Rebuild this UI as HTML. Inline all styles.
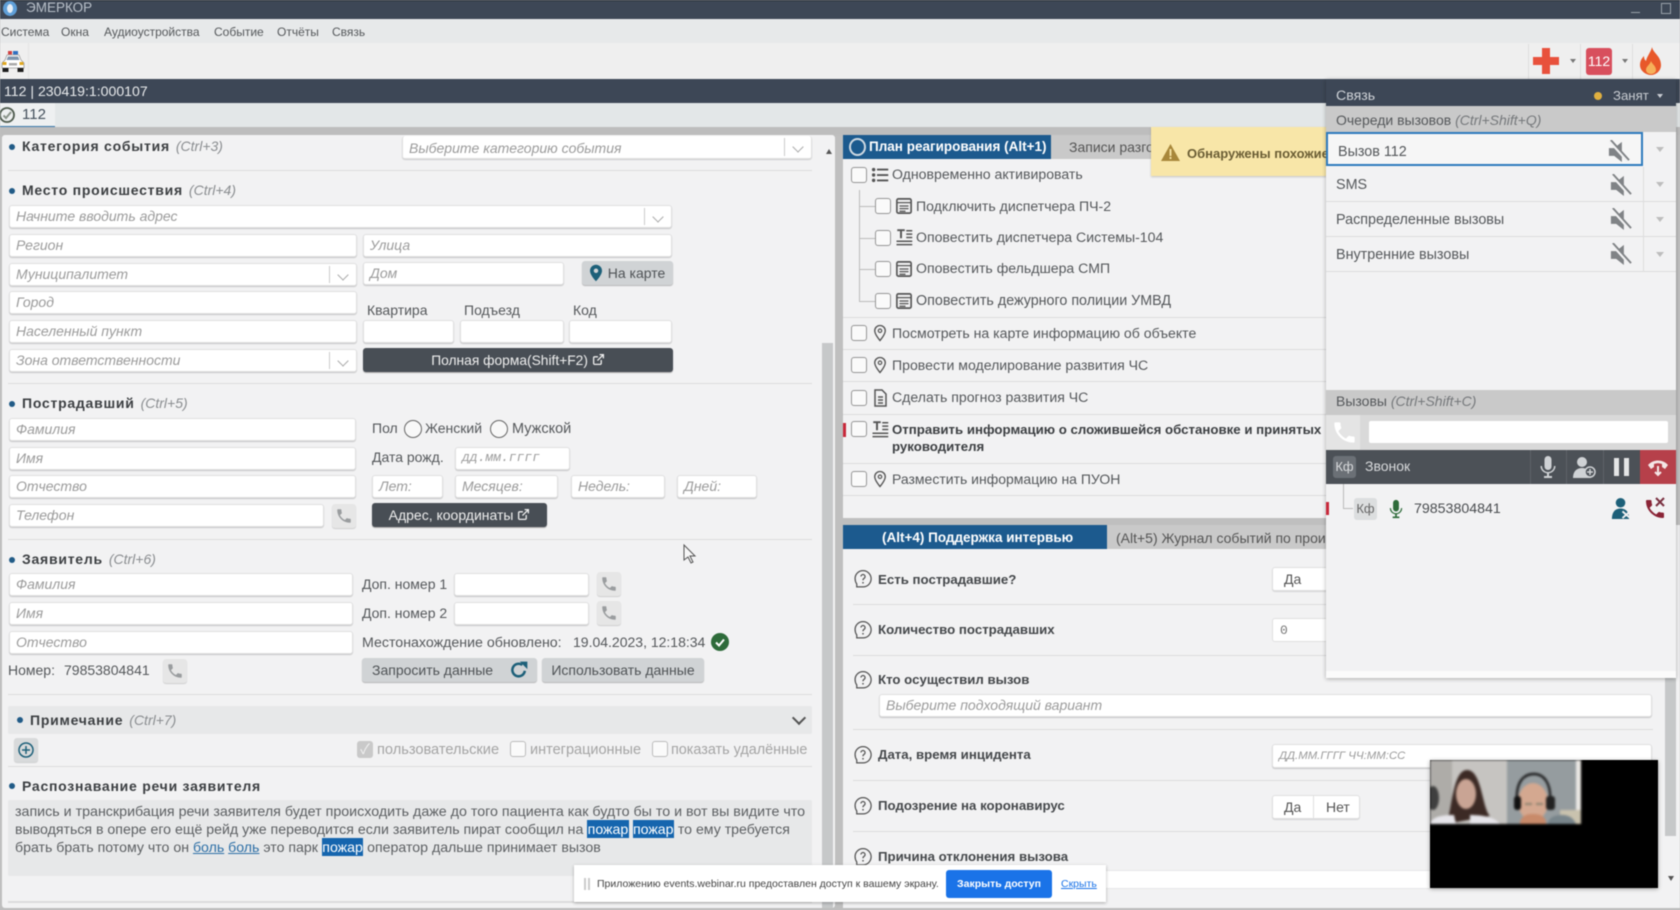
<!DOCTYPE html>
<html lang="ru"><head><meta charset="utf-8"><title>ЭМЕРКОР</title>
<style>
*{box-sizing:border-box}
html,body{margin:0;padding:0;width:1680px;height:910px;overflow:hidden;background:#bfbfbf}
body{font-family:"Liberation Sans","Noto Sans CJK SC",sans-serif;font-size:14px;color:#4a4d50;position:relative}
#w{position:absolute;left:0;top:0;width:1680px;height:910px;overflow:hidden;filter:blur(.55px)}
.a,.t,.i,.b,.dv,.cb,.h,.dot{position:absolute}
.t{white-space:nowrap;line-height:20px;height:20px}
.i{background:#fff;border:1px solid #e0e0e0;border-radius:3px;box-shadow:0 1px 1px rgba(0,0,0,.18);font-style:italic;color:#9b9b9b;padding-left:6px;line-height:20px;white-space:nowrap;overflow:hidden}
.i .s{position:absolute;right:0;top:2px;bottom:2px;width:27px;border-left:1px solid #ccc}
.i .s:after{content:"";position:absolute;left:9px;top:5px;width:7px;height:7px;border-right:1.3px solid #aaa;border-bottom:1.3px solid #aaa;transform:rotate(45deg)}
.b{border-radius:3px;text-align:center;white-space:nowrap;line-height:24px}
.dk{background:#484e55;color:#eee;box-shadow:0 1px 1px rgba(0,0,0,.3)}
.lt{background:#d0d3d5;color:#4f5356;box-shadow:0 1px 1px rgba(0,0,0,.25)}
.ph{background:#e6e6e6;border-radius:3px;position:absolute;box-shadow:0 1px 1px rgba(0,0,0,.15)}
.ph svg{position:absolute;left:3px;top:3px}
.dv{height:1px;background:#dcdcdc}
.h{font-weight:bold;color:#3c3f42;letter-spacing:.75px;white-space:nowrap;line-height:20px}
.h i{font-weight:normal;color:#8a8d90;letter-spacing:0;margin-left:6px}
.dot{width:6px;height:6px;border-radius:50%;background:#215b87}
.cb{width:16px;height:16px;border:1.5px solid #969696;border-radius:3px;background:#fafafa}
.g{color:#55585b}
.m{background:#1565ae;color:#fff;padding:1px .4px}
.l{color:#2d6fa6;text-decoration:underline}
.rw{color:#55585b;font-size:14.1px}
.qt{color:#45484b;font-weight:bold;font-size:13.25px}
.cr{color:#55585b;font-size:14.35px}
</style></head><body>
<svg width="0" height="0" style="position:absolute"><defs>
<symbol id="phone" viewBox="0 0 24 24"><path d="M6.600 10.800c1.400 2.800 3.800 5.100 6.600 6.600l2.200-2.200c.3-.3.7-.4 1-.2 1.100.4 2.300.6 3.600.6.600 0 1 .4 1 1V20c0 .6-.4 1-1 1C10.600 21 3 13.400 3 4c0-.6.400-1 1-1h3.500c.6 0 1 .4 1 1 0 1.300.2 2.500.6 3.600.1.300 0 .7-.2 1z"/></symbol>
<symbol id="mute" viewBox="0 0 24 24"><path d="M2 8.500v8h5.500l8 6.500V2l-8 6.500z"/><path d="M3 1l19 21" stroke="#f2f2f3" stroke-width="3.600"/><path d="M4 0l19 21" stroke="currentColor" stroke-width="2"/></symbol>
<symbol id="mic" viewBox="0 0 24 24"><path d="M12 15a3.500 3.500 0 0 0 3.500-3.500v-7a3.500 3.500 0 0 0-7 0v7A3.500 3.500 0 0 0 12 15zm6-4a6 6 0 0 1-12 0H4.500a7.500 7.500 0 0 0 6.500 7.400V21H8v2h8v-2h-3v-2.600a7.500 7.500 0 0 0 6.500-7.400z"/></symbol>
<symbol id="pin" viewBox="0 0 24 24"><path fill="none" stroke="currentColor" stroke-width="1.800" d="M12 2a7 7 0 0 0-7 7c0 5 7 13 7 13s7-8 7-13a7 7 0 0 0-7-7z"/><circle cx="12" cy="9" r="2.300" fill="none" stroke="currentColor" stroke-width="1.600"/></symbol>
<symbol id="doc" viewBox="0 0 24 24"><rect x="2.500" y="2.500" width="19" height="19" rx="2" fill="none" stroke="currentColor" stroke-width="2.200"/><path d="M3 7.500h18M6 12h12M6 15.500h12M6 19h8" stroke="currentColor" stroke-width="1.800"/></symbol>
<symbol id="te" viewBox="0 0 24 24"><path d="M3 1h10v2.500H9.300V13H6.700V3.500H3zM15 2h8v2h-8zM15 6.500h8v2h-8zM15 11h8v2h-8zM2 16h21v2H2zM2 20.500h21v2H2z"/></symbol>
<symbol id="list" viewBox="0 0 24 24"><path d="M8 3.500h15v2.500H8zM8 10.800h15v2.500H8zM8 18h15v2.500H8z"/><circle cx="3.500" cy="4.800" r="2.300"/><circle cx="3.500" cy="12" r="2.300"/><circle cx="3.500" cy="19.200" r="2.300"/></symbol>
<symbol id="q" viewBox="0 0 24 24"><path fill="none" stroke="currentColor" stroke-width="1.500" d="M12 2a9.500 9.500 0 0 0-9.500 9.500c0 3 1 5 2 6.500v3.500H12a9.500 9.500 0 0 0 0-19.500z"/><path fill="none" stroke="currentColor" stroke-width="1.500" d="M9.500 9a2.500 2.500 0 1 1 3.800 2.200c-1 .6-1.300 1.100-1.300 2.300"/><circle cx="12" cy="16.500" r="1"/></symbol>
<symbol id="ext" viewBox="0 0 24 24"><path fill="none" stroke="currentColor" stroke-width="2.400" d="M17 13v6a2 2 0 0 1-2 2H5a2 2 0 0 1-2-2V9a2 2 0 0 1 2-2h6M14 3h7v7M21 3 10 14"/></symbol>
</defs></svg>
<div id="w">
<!-- title bar -->
<div class="a" style="left:0;top:0;width:1680px;height:19px;background:#3d4756;border-top:1px solid #262b33"></div>
<div class="a" style="left:3px;top:1px;width:14px;height:15px;border-radius:50%;background:#5f9fd8"></div>
<div class="a" style="left:7px;top:4px;width:6px;height:9px;border-radius:50%;background:#e6eef6"></div>
<div class="t" style="left:26px;top:-2px;color:#b9c0c9;font-size:13.500px">ЭМЕРКОР</div>
<div class="a" style="left:1631px;top:12px;width:9px;height:1px;background:#98a0a8"></div>
<div class="a" style="left:1661px;top:3px;width:10px;height:11px;border:1px solid #98a0a8"></div>
<!-- menu -->
<div class="a" style="left:0;top:19px;width:1680px;height:24px;background:#e7e9ea"></div>
<div class="t g" style="left:1px;top:22px;font-size:12px">Система</div>
<div class="t g" style="left:61px;top:22px;font-size:12px">Окна</div>
<div class="t g" style="left:104px;top:22px;font-size:12px">Аудиоустройства</div>
<div class="t g" style="left:214px;top:22px;font-size:12px">Событие</div>
<div class="t g" style="left:277px;top:22px;font-size:12px">Отчёты</div>
<div class="t g" style="left:332px;top:22px;font-size:12px">Связь</div>
<!-- toolbar -->
<div class="a" style="left:0;top:43px;width:1680px;height:36px;background:#efefef"></div>
<div class="a" style="left:28px;top:43px;width:1px;height:36px;background:#e4e4e4"></div>
<svg class="a" style="left:1px;top:51px" width="24" height="21" viewBox="0 0 24 21"><rect x="7" y="0" width="4" height="3.500" fill="#d04040"/><rect x="12" y="0" width="5" height="3.500" fill="#2f6fc0"/><path d="M6 4h12l2 5 3 3v5H1v-5l3-3z" fill="#fff" stroke="#9a9a9a" stroke-width=".8"/><path d="M7 5.500h10l1.500 3.500H5.500z" fill="#7f95ad"/><rect x="1.500" y="11" width="4" height="3" fill="#e0a820"/><rect x="18.500" y="11" width="4" height="3" fill="#e0a820"/><rect x="8" y="12" width="8" height="2.500" fill="#aaa"/><rect x="1.500" y="17" width="6" height="4" fill="#1c1c1c"/><rect x="16.500" y="17" width="6" height="4" fill="#1c1c1c"/></svg>
<svg class="a" style="left:1532px;top:47px" width="28" height="28" viewBox="0 0 28 28"><path d="M10 1h8v9h9v8h-9v9h-8v-9H1v-8h9z" fill="#e8513c"/></svg>
<div class="a" style="left:1570px;top:59px;border:3px solid transparent;border-top:4px solid #777"></div>
<div class="a" style="left:1586px;top:48px;width:26px;height:27px;background:#d84f5d;border-radius:3px;color:#fff;font-size:14px;line-height:27px;text-align:center">112</div>
<div class="a" style="left:1622px;top:59px;border:3px solid transparent;border-top:4px solid #777"></div>
<svg class="a" style="left:1639px;top:47px" width="24" height="28" viewBox="0 0 24 28"><path d="M13 0c1 6 9 9 9 18 0 6-5 10-10 10S1 24 1 18c0-4 2-7 4-9 0 3 1 4 2 5 1-5 5-9 6-14z" fill="#e8582a"/><path d="M12 14c1 3 5 5 5 9 0 2-2 4-5 4s-5-2-5-4c0-4 4-5 5-9z" fill="#f6b05a"/></svg>
<div class="a" style="left:1528px;top:44px;width:1px;height:35px;background:#dedede"></div>
<div class="a" style="left:1580px;top:44px;width:1px;height:35px;background:#dedede"></div>
<div class="a" style="left:1632px;top:44px;width:1px;height:35px;background:#dedede"></div>
<!-- dark bar -->
<div class="a" style="left:0;top:79px;width:1680px;height:24px;background:#3d4756"></div>
<div class="t" style="left:4px;top:81px;color:#e8eaec;font-size:14.100px">112 | 230419:1:000107</div>
<!-- tab bar -->
<div class="a" style="left:0;top:103px;width:1680px;height:24px;background:#e3e7e8"></div>
<div class="a" style="left:0;top:103px;width:55px;height:25px;background:#eef0f1;border-bottom:2px solid #3878ad"></div>
<svg class="a" style="left:-1px;top:106px" width="17" height="18" viewBox="0 0 17 18"><circle cx="8" cy="9" r="7" fill="#eef0f1" stroke="#4d5a4d" stroke-width="1.800"/><path d="M4.500 9.500l2.500 2.500 5-6" fill="none" stroke="#8a948a" stroke-width="2"/></svg>
<div class="t" style="left:22px;top:105px;font-size:15px;color:#44505c">112</div>
<div class="a" style="left:0;top:127px;width:1680px;height:8px;background:#bdbdbd"></div>

<!-- LEFT PANEL -->
<div class="a" style="left:2px;top:135px;width:833px;height:773px;background:#f2f2f3;border-radius:3px"></div>
<div class="dot" style="left:9px;top:144px"></div><div class="h" style="left:22px;top:136px">Категория события<i>(Ctrl+3)</i></div>
<div class="i" style="left:402px;top:136px;width:410px;height:23px;border-top:0;line-height:24px;box-shadow:0 1px 1px rgba(0,0,0,.15)">Выберите категорию события<span class="s"></span></div>
<div class="a" style="left:826px;top:146px;border:3px solid transparent;border-bottom:5px solid #555"></div>
<div class="a" style="left:822px;top:343px;width:11px;height:565px;background:#c6c8c9"></div>
<div class="dv" style="left:8px;top:170px;width:804px"></div>

<div class="dot" style="left:9px;top:188px"></div><div class="h" style="left:22px;top:180px">Место происшествия<i>(Ctrl+4)</i></div>
<div class="i" style="left:9px;top:205px;width:663px;height:23px">Начните вводить адрес<span class="s"></span></div>
<div class="i" style="left:9px;top:234px;width:348px;height:23px">Регион</div>
<div class="i" style="left:363px;top:234px;width:309px;height:23px">Улица</div>
<div class="i" style="left:9px;top:263px;width:348px;height:23px">Муниципалитет<span class="s"></span></div>
<div class="i" style="left:363px;top:262px;width:201px;height:23px">Дом</div>
<div class="b lt" style="left:582px;top:261px;width:91px;height:24px;padding-left:18px">На карте</div>
<svg class="a" style="left:587px;top:264px;color:#1d6079" width="18" height="18" viewBox="0 0 24 24"><path fill="#1d6079" d="M12 1a8 8 0 0 0-8 8c0 6 8 14 8 14s8-8 8-14a8 8 0 0 0-8-8zm0 11a3 3 0 1 1 0-6 3 3 0 0 1 0 6z"/></svg>
<div class="i" style="left:9px;top:291px;width:348px;height:23px">Город</div>
<div class="t g" style="left:367px;top:300px">Квартира</div><div class="t g" style="left:464px;top:300px">Подъезд</div><div class="t g" style="left:573px;top:300px">Код</div>
<div class="i" style="left:9px;top:320px;width:348px;height:23px">Населенный пункт</div>
<div class="i" style="left:363px;top:320px;width:91px;height:23px"></div>
<div class="i" style="left:460px;top:320px;width:104px;height:23px"></div>
<div class="i" style="left:569px;top:320px;width:103px;height:23px"></div>
<div class="i" style="left:9px;top:349px;width:348px;height:23px">Зона ответственности<span class="s"></span></div>
<div class="b dk" style="left:363px;top:348px;width:310px;height:24px;font-size:13.800px;line-height:25px">Полная форма(Shift+F2) <svg width="13" height="13" style="vertical-align:-1px;color:#eee"><use href="#ext"/></svg></div>
<div class="dv" style="left:8px;top:383px;width:804px"></div>

<div class="dot" style="left:9px;top:401px"></div><div class="h" style="left:22px;top:393px">Пострадавший<i>(Ctrl+5)</i></div>
<div class="i" style="left:9px;top:418px;width:347px;height:23px">Фамилия</div>
<div class="t g" style="left:372px;top:418px">Пол</div>
<div class="a" style="left:404px;top:420px;width:18px;height:18px;border:1.500px solid #666;border-radius:50%;background:#f8f8f8"></div>
<div class="t g" style="left:425px;top:418px">Женский</div>
<div class="a" style="left:490px;top:420px;width:18px;height:18px;border:1.500px solid #666;border-radius:50%;background:#f8f8f8"></div>
<div class="t g" style="left:512px;top:419px;font-size:14.500px">Мужской</div>
<div class="i" style="left:9px;top:447px;width:347px;height:23px">Имя</div>
<div class="t g" style="left:372px;top:447px">Дата рожд.</div>
<div class="i" style="left:455px;top:447px;width:115px;height:23px;font-family:'Liberation Mono',monospace;font-size:13px;font-style:italic">дд.мм.гггг</div>
<div class="i" style="left:9px;top:475px;width:347px;height:23px">Отчество</div>
<div class="i" style="left:372px;top:475px;width:71px;height:23px">Лет:</div>
<div class="i" style="left:455px;top:475px;width:103px;height:23px">Месяцев:</div>
<div class="i" style="left:571px;top:475px;width:94px;height:23px">Недель:</div>
<div class="i" style="left:677px;top:475px;width:80px;height:23px">Дней:</div>
<div class="i" style="left:9px;top:504px;width:315px;height:23px">Телефон</div>
<div class="ph" style="left:332px;top:504px;width:24px;height:24px"><svg width="18" height="18" fill="#9a9d9f"><use href="#phone"/></svg></div>
<div class="b dk" style="left:372px;top:503px;width:175px;height:24px;line-height:25px">Адрес, координаты <svg width="13" height="13" style="vertical-align:-1px;color:#eee"><use href="#ext"/></svg></div>
<div class="dv" style="left:8px;top:539px;width:804px"></div>

<div class="dot" style="left:9px;top:557px"></div><div class="h" style="left:22px;top:549px">Заявитель<i>(Ctrl+6)</i></div>
<div class="i" style="left:9px;top:573px;width:344px;height:23px">Фамилия</div>
<div class="t g" style="left:362px;top:574px">Доп. номер 1</div>
<div class="i" style="left:454px;top:573px;width:135px;height:23px"></div>
<div class="ph" style="left:597px;top:572px;width:24px;height:24px"><svg width="18" height="18" fill="#9a9d9f"><use href="#phone"/></svg></div>
<div class="i" style="left:9px;top:602px;width:344px;height:23px">Имя</div>
<div class="t g" style="left:362px;top:603px">Доп. номер 2</div>
<div class="i" style="left:454px;top:602px;width:135px;height:23px"></div>
<div class="ph" style="left:597px;top:601px;width:24px;height:24px"><svg width="18" height="18" fill="#9a9d9f"><use href="#phone"/></svg></div>
<div class="i" style="left:9px;top:631px;width:344px;height:23px">Отчество</div>
<div class="t g" style="left:362px;top:633px;font-size:14.200px">Местонахождение обновлено:</div>
<div class="t g" style="left:573px;top:632px">19.04.2023, 12:18:34</div>
<svg class="a" style="left:711px;top:633px" width="18" height="18" viewBox="0 0 18 18"><circle cx="9" cy="9" r="9" fill="#2e6b3a"/><path d="M5 9.500l3 3 5-6" fill="none" stroke="#fff" stroke-width="2"/></svg>
<div class="t g" style="left:8px;top:660px">Номер:</div><div class="t g" style="left:64px;top:660px">79853804841</div>
<div class="ph" style="left:163px;top:659px;width:24px;height:24px"><svg width="18" height="18" fill="#9a9d9f"><use href="#phone"/></svg></div>
<div class="b lt" style="left:362px;top:658px;width:175px;height:24px;text-align:left;padding-left:10px">Запросить данные</div>
<svg class="a" style="left:509px;top:660px" width="20" height="20" viewBox="0 0 24 24"><path fill="none" stroke="#1d6079" stroke-width="3" d="M19 13a7.500 7.500 0 1 1-3-7"/><path fill="#1d6079" d="M13 2h9v9z"/></svg>
<div class="b lt" style="left:542px;top:658px;width:162px;height:24px">Использовать данные</div>
<div class="dv" style="left:8px;top:694px;width:804px"></div>

<div class="a" style="left:8px;top:706px;width:804px;height:28px;background:#e7e8e9;border-radius:2px"></div>
<div class="dot" style="left:17px;top:717px"></div><div class="h" style="left:30px;top:710px">Примечание<i>(Ctrl+7)</i></div>
<div class="a" style="left:794px;top:713px;width:10px;height:10px;border-right:2px solid #555;border-bottom:2px solid #555;transform:rotate(45deg)"></div>
<div class="ph" style="left:14px;top:738px;width:24px;height:24px;background:#d8dadb"><svg width="18" height="18" viewBox="0 0 18 18" fill="none" stroke="#1d6079" stroke-width="1.500"><circle cx="9" cy="9" r="7"/><path d="M9 5v8M5 9h8"/></svg></div>
<div class="a" style="left:357px;top:741px;width:16px;height:17px;border-radius:3px;background:#c9c9c9;color:#f2f2f2;font-size:14px;line-height:17px;text-align:center">✓</div>
<div class="t" style="left:377px;top:740px;color:#a4a4a4;font-size:14.600px">пользовательские</div>
<div class="cb" style="left:510px;top:741px;border-color:#bcbcbc"></div>
<div class="t" style="left:530px;top:740px;color:#a4a4a4;font-size:14.500px">интеграционные</div>
<div class="cb" style="left:652px;top:741px;border-color:#bcbcbc"></div>
<div class="t" style="left:671px;top:740px;color:#a4a4a4;font-size:14.400px">показать удалённые</div>
<div class="dv" style="left:8px;top:766px;width:804px"></div>

<div class="dot" style="left:9px;top:783px"></div><div class="h" style="left:22px;top:776px">Распознавание речи заявителя</div>
<div class="a" style="left:8px;top:800px;width:804px;height:76px;background:#e7e8e9;border-radius:2px"></div>
<div class="t" style="left:15px;top:802px;font-size:14.250px;color:#5c5f62">запись и транскрибация речи заявителя будет происходить даже до того пациента как будто бы то и вот вы видите что</div>
<div class="t" style="left:15px;top:819px;font-size:14.150px;color:#5c5f62">выводяться в опере его ещё рейд уже переводится если заявитель пират сообщил на <span class="m">пожар</span> <span class="m">пожар</span> то ему требуется</div>
<div class="t" style="left:15px;top:837px;font-size:14.150px;color:#5c5f62">брать брать потому что он <span class="l">боль</span> <span class="l">боль</span> это парк <span class="m">пожар</span> оператор дальше принимает вызов</div>
<div class="dv" style="left:8px;top:901px;width:804px;height:2px"></div>

<!-- RIGHT MAIN top -->
<div class="a" style="left:843px;top:135px;width:484px;height:383px;background:#f2f2f3"></div>
<div class="a" style="left:843px;top:135px;width:484px;height:24px;background:#c9c9c9"></div>
<div class="a" style="left:843px;top:135px;width:208px;height:24px;background:#1c5a8e"></div>
<div class="a" style="left:849px;top:138px;width:17px;height:18px;border:2px solid #cfd9e2;border-radius:50%"></div>
<div class="t" style="left:869px;top:137px;color:#fff;font-weight:bold;font-size:13.500px">План реагирования (Alt+1)</div>
<div class="t" style="left:1069px;top:137px;color:#555">Записи разговоров</div>

<div class="cb" style="left:851px;top:167px"></div><svg class="a" style="left:871px;top:166px;fill:#555" width="18" height="18"><use href="#list"/></svg>
<div class="t rw" style="left:892px;top:164px">Одновременно активировать</div>
<div class="a" style="left:859px;top:190px;width:1px;height:112px;background:#bbb"></div>
<div class="a" style="left:859px;top:206px;width:16px;height:1px;background:#bbb"></div>
<div class="a" style="left:859px;top:238px;width:16px;height:1px;background:#bbb"></div>
<div class="a" style="left:859px;top:269px;width:16px;height:1px;background:#bbb"></div>
<div class="a" style="left:859px;top:301px;width:16px;height:1px;background:#bbb"></div>
<div class="cb" style="left:875px;top:198px"></div><svg class="a" style="left:895px;top:197px;color:#555" width="18" height="18"><use href="#doc"/></svg>
<div class="t rw" style="left:916px;top:196px">Подключить диспетчера ПЧ-2</div>
<div class="cb" style="left:875px;top:230px"></div><svg class="a" style="left:895px;top:228px;fill:#555" width="18" height="19"><use href="#te"/></svg>
<div class="t rw" style="left:916px;top:227px">Оповестить диспетчера Системы-104</div>
<div class="cb" style="left:875px;top:261px"></div><svg class="a" style="left:895px;top:260px;color:#555" width="18" height="18"><use href="#doc"/></svg>
<div class="t rw" style="left:916px;top:258px">Оповестить фельдшера СМП</div>
<div class="cb" style="left:875px;top:293px"></div><svg class="a" style="left:895px;top:292px;color:#555" width="18" height="18"><use href="#doc"/></svg>
<div class="t rw" style="left:916px;top:291px;font-size:14.300px">Оповестить дежурного полиции УМВД</div>
<div class="dv" style="left:843px;top:317px;width:484px"></div>
<div class="cb" style="left:851px;top:325px"></div><svg class="a" style="left:871px;top:324px;color:#555" width="18" height="18"><use href="#pin"/></svg>
<div class="t rw" style="left:892px;top:323px">Посмотреть на карте информацию об объекте</div>
<div class="dv" style="left:843px;top:349px;width:484px"></div>
<div class="cb" style="left:851px;top:357px"></div><svg class="a" style="left:871px;top:356px;color:#555" width="18" height="18"><use href="#pin"/></svg>
<div class="t rw" style="left:892px;top:355px">Провести моделирование развития ЧС</div>
<div class="dv" style="left:843px;top:381px;width:484px"></div>
<div class="cb" style="left:851px;top:390px"></div><svg class="a" style="left:871px;top:389px" width="18" height="18" viewBox="0 0 18 18" fill="none" stroke="#555" stroke-width="1.500"><path d="M4 1h7l4 4v12H4zM7 8h5M7 11h5M7 14h5"/></svg>
<div class="t rw" style="left:892px;top:387px">Сделать прогноз развития ЧС</div>
<div class="dv" style="left:843px;top:414px;width:484px"></div>
<div class="a" style="left:843px;top:423px;width:3px;height:14px;background:#c8283a"></div>
<div class="cb" style="left:851px;top:421px"></div><svg class="a" style="left:871px;top:420px;fill:#555" width="18" height="19"><use href="#te"/></svg>
<div class="t" style="left:892px;top:420px;color:#3c3f42;font-weight:bold;font-size:13.250px">Отправить информацию о сложившейся обстановке и принятых</div>
<div class="t" style="left:892px;top:437px;color:#3c3f42;font-weight:bold;font-size:13.250px">руководителя</div>
<div class="dv" style="left:843px;top:463px;width:484px"></div>
<div class="cb" style="left:851px;top:471px"></div><svg class="a" style="left:871px;top:470px;color:#555" width="18" height="18"><use href="#pin"/></svg>
<div class="t rw" style="left:892px;top:469px;font-size:14px">Разместить информацию на ПУОН</div>
<div class="dv" style="left:843px;top:495px;width:484px"></div>

<!-- warn -->
<div class="a" style="left:1151px;top:127px;width:176px;height:49px;background:#f8e6a8;box-shadow:0 1px 2px rgba(0,0,0,.2);overflow:hidden">
<svg class="a" style="left:10px;top:17px" width="19" height="17" viewBox="0 0 19 17"><path d="M9.500 0l9.500 17H0z" fill="#a8873a"/><rect x="8.600" y="5" width="1.800" height="7" fill="#f8e6a8"/><rect x="8.600" y="13" width="1.800" height="2" fill="#f8e6a8"/></svg>
<div class="t" style="left:36px;top:17px;color:#6a5d34;font-weight:bold;font-size:13px">Обнаружены похожие</div></div>

<!-- RIGHT MAIN bottom -->
<div class="a" style="left:843px;top:525px;width:837px;height:385px;background:#f2f2f3"></div>
<div class="a" style="left:843px;top:525px;width:484px;height:24px;background:#c9c9c9"></div>
<div class="a" style="left:843px;top:525px;width:264px;height:24px;background:#1c5a8e"></div>
<div class="t" style="left:882px;top:528px;color:#fff;font-weight:bold;font-size:13.500px">(Alt+4) Поддержка интервью</div>
<div class="t" style="left:1116px;top:528px;color:#555">(Alt+5) Журнал событий по происшествию</div>

<svg class="a" style="left:853px;top:568px;color:#555;fill:#555" width="20" height="22"><use href="#q"/></svg>
<div class="t qt" style="left:878px;top:570px">Есть пострадавшие?</div>
<div class="a" style="left:1272px;top:567px;width:100px;height:24px;background:#fff;border:1px solid #e0e0e0;border-radius:3px;line-height:23px;color:#555;padding-left:11px;box-shadow:0 1px 1px rgba(0,0,0,.12)">Да</div>
<div class="dv" style="left:853px;top:604px;width:800px"></div>
<svg class="a" style="left:853px;top:619px;color:#555;fill:#555" width="20" height="22"><use href="#q"/></svg>
<div class="t qt" style="left:878px;top:620px">Количество пострадавших</div>
<div class="a" style="left:1272px;top:618px;width:100px;height:24px;background:#fff;border:1px solid #e0e0e0;border-radius:3px;line-height:23px;color:#777;padding-left:7px;font-family:'Liberation Mono',monospace;font-size:13px">0</div>
<div class="dv" style="left:853px;top:655px;width:800px"></div>
<svg class="a" style="left:853px;top:669px;color:#555;fill:#555" width="20" height="22"><use href="#q"/></svg>
<div class="t qt" style="left:878px;top:670px">Кто осуществил вызов</div>
<div class="i" style="left:879px;top:694px;width:773px;height:23px">Выберите подходящий вариант</div>
<div class="dv" style="left:853px;top:729px;width:800px"></div>
<svg class="a" style="left:853px;top:744px;color:#555;fill:#555" width="20" height="22"><use href="#q"/></svg>
<div class="t qt" style="left:878px;top:745px">Дата, время инцидента</div>
<div class="i" style="left:1272px;top:744px;width:380px;height:24px;font-size:11.400px;line-height:22px">ДД.ММ.ГГГГ ЧЧ:ММ:СС</div>
<div class="dv" style="left:853px;top:780px;width:800px"></div>
<svg class="a" style="left:853px;top:795px;color:#555;fill:#555" width="20" height="22"><use href="#q"/></svg>
<div class="t qt" style="left:878px;top:796px">Подозрение на коронавирус</div>
<div class="a" style="left:1272px;top:795px;width:88px;height:24px;background:#fff;border:1px solid #e0e0e0;border-radius:3px;line-height:23px;color:#555;padding-left:11px;box-shadow:0 1px 1px rgba(0,0,0,.12)">Да<span style="position:absolute;left:40px;top:0;bottom:0;width:1px;background:#e0e0e0"></span><span style="position:absolute;left:53px;top:0">Нет</span></div>
<div class="dv" style="left:853px;top:831px;width:800px"></div>
<svg class="a" style="left:853px;top:846px;color:#555;fill:#555" width="20" height="22"><use href="#q"/></svg>
<div class="t qt" style="left:878px;top:847px">Причина отклонения вызова</div>
<div class="a" style="left:879px;top:870px;width:773px;height:19px;background:#fff;border:1px solid #e8e8e8"></div>
<div class="a" style="left:1665px;top:678px;width:11px;height:158px;background:#c6c8c9"></div>
<div class="a" style="left:1668px;top:876px;border:3px solid transparent;border-top:5px solid #555"></div>

<!-- CONNECT PANEL -->
<div class="a" style="left:1326px;top:79px;width:350px;height:599px;background:#f2f2f3;box-shadow:0 1px 4px rgba(0,0,0,.3)"></div>
<div class="a" style="left:1326px;top:79px;width:350px;height:27px;background:#3d4756"></div>
<div class="t" style="left:1336px;top:86px;color:#cfd3d8;font-size:14.200px">Связь</div>
<div class="a" style="left:1594px;top:92px;width:8px;height:8px;border-radius:50%;background:#e0b040"></div>
<div class="t" style="left:1613px;top:86px;color:#c8ccd2;font-size:13.200px">Занят</div>
<div class="a" style="left:1657px;top:94px;border:3.500px solid transparent;border-top:4px solid #c8ccd2"></div>
<div class="a" style="left:1326px;top:106px;width:350px;height:26px;background:#c9c9c9"></div>
<div class="t" style="left:1336px;top:110px;color:#55585b;font-size:14px">Очереди вызовов <i style="color:#75787b">(Ctrl+Shift+Q)</i></div>

<div class="a" style="left:1326px;top:132px;width:317px;height:34px;border:2px solid #2e7bbd;background:#f6f6f6"></div>
<div class="t cr" style="left:1338px;top:142px">Вызов 112</div>
<svg class="a" style="left:1607px;top:140px;fill:#808386;color:#808386" width="23" height="23"><use href="#mute"/></svg>
<div class="a" style="left:1656px;top:147px;border:4px solid transparent;border-top:5px solid #bdbdbd"></div>
<div class="t cr" style="left:1336px;top:175px">SMS</div>
<svg class="a" style="left:1609px;top:174px;fill:#808386;color:#808386" width="23" height="23"><use href="#mute"/></svg>
<div class="a" style="left:1656px;top:182px;border:4px solid transparent;border-top:5px solid #bdbdbd"></div>
<div class="dv" style="left:1326px;top:201px;width:350px"></div>
<div class="t cr" style="left:1336px;top:210px">Распределенные вызовы</div>
<svg class="a" style="left:1609px;top:208px;fill:#808386;color:#808386" width="23" height="23"><use href="#mute"/></svg>
<div class="a" style="left:1656px;top:217px;border:4px solid transparent;border-top:5px solid #bdbdbd"></div>
<div class="dv" style="left:1326px;top:236px;width:350px"></div>
<div class="t cr" style="left:1336px;top:245px">Внутренние вызовы</div>
<svg class="a" style="left:1609px;top:243px;fill:#808386;color:#808386" width="23" height="23"><use href="#mute"/></svg>
<div class="a" style="left:1656px;top:252px;border:4px solid transparent;border-top:5px solid #bdbdbd"></div>
<div class="dv" style="left:1326px;top:271px;width:350px"></div>
<div class="a" style="left:1643px;top:167px;width:1px;height:105px;background:#ddd"></div>

<div class="a" style="left:1326px;top:390px;width:350px;height:25px;background:#c9c9c9"></div>
<div class="t" style="left:1336px;top:391px;color:#55585b;font-size:14px">Вызовы <i style="color:#75787b">(Ctrl+Shift+C)</i></div>
<div class="a" style="left:1326px;top:415px;width:350px;height:35px;background:#d9d9d9"></div>
<div class="a" style="left:1326px;top:415px;width:34px;height:35px;background:#e4e4e4"></div>
<svg class="a" style="left:1331px;top:419px;fill:#fff" width="27" height="27"><use href="#phone"/></svg>
<div class="a" style="left:1369px;top:421px;width:299px;height:22px;background:#fff;border-radius:2px"></div>

<div class="a" style="left:1326px;top:450px;width:350px;height:34px;background:#4c5157"></div>
<div class="a" style="left:1530px;top:450px;width:1px;height:34px;background:#5d6268"></div>
<div class="a" style="left:1566px;top:450px;width:1px;height:34px;background:#5d6268"></div>
<div class="a" style="left:1603px;top:450px;width:1px;height:34px;background:#5d6268"></div>
<div class="a" style="left:1333px;top:456px;width:23px;height:22px;background:#6b7076;border-radius:3px;color:#d8dadc;font-size:13px;line-height:22px;text-align:center">Кф</div>
<div class="t" style="left:1365px;top:456px;color:#d8dadc">Звонок</div>
<svg class="a" style="left:1536px;top:455px;fill:#cfd2d5" width="24" height="24"><use href="#mic"/></svg>
<svg class="a" style="left:1572px;top:455px" width="24" height="24" viewBox="0 0 24 24"><circle cx="10" cy="7" r="5" fill="#cfd2d5"/><path d="M1 23c0-7 4-10 9-10s9 3 9 10z" fill="#cfd2d5"/><circle cx="18" cy="17" r="5" fill="#4c5157" stroke="#cfd2d5" stroke-width="1.500"/><path d="M18 14v6M15 17h6" stroke="#cfd2d5" stroke-width="1.500"/></svg>
<div class="a" style="left:1614px;top:458px;width:5px;height:18px;background:#e4e5e6"></div>
<div class="a" style="left:1624px;top:458px;width:5px;height:18px;background:#e4e5e6"></div>
<div class="a" style="left:1640px;top:450px;width:36px;height:34px;background:#b6404a"></div>
<svg class="a" style="left:1646px;top:455px" width="24" height="24" viewBox="0 0 24 24"><path d="M2 10c5-6 15-6 20 0l-3 4-3-2V9c-3-1-5-1-8 0v3l-3 2z" fill="#f4e6e6"/><path d="M12 11v9M9 17l3 3 3-3" stroke="#f4e6e6" stroke-width="2" fill="none"/></svg>
<div class="a" style="left:1343px;top:484px;width:1px;height:24px;background:#bbb"></div>
<div class="a" style="left:1343px;top:508px;width:10px;height:1px;background:#bbb"></div>
<div class="a" style="left:1326px;top:502px;width:3px;height:13px;background:#c8283a"></div>
<div class="a" style="left:1354px;top:498px;width:23px;height:22px;background:#dcdedf;border-radius:3px;color:#666;font-size:13px;line-height:22px;text-align:center">Кф</div>
<svg class="a" style="left:1386px;top:499px;fill:#2e6b3a" width="20" height="20"><use href="#mic"/></svg>
<div class="t" style="left:1414px;top:499px;color:#4a4d50;font-size:14.200px">79853804841</div>
<svg class="a" style="left:1610px;top:497px" width="23" height="23" viewBox="0 0 24 24"><circle cx="11" cy="6" r="5" fill="#1d6079"/><path d="M2 23c0-8 4-11 9-11s9 3 9 11z" fill="#1d6079"/><path d="M13 15l8 7M21 15l-8 7" stroke="#f2f2f3" stroke-width="2"/></svg>
<svg class="a" style="left:1643px;top:497px;fill:#8a2436" width="24" height="24"><use href="#phone"/></svg>
<svg class="a" style="left:1654px;top:497px" width="12" height="12" viewBox="0 0 12 12"><path d="M2 1l8 8M10 1l-8 8" stroke="#7a3040" stroke-width="2"/></svg>
<div class="a" style="left:1326px;top:671px;width:350px;height:7px;background:#fbfbfb"></div>

<!-- video -->
<div class="a" style="left:1430px;top:760px;width:228px;height:128px;background:#000;box-shadow:0 1px 4px rgba(0,0,0,.35);overflow:hidden">
<svg width="151" height="64" viewBox="0 0 151 64" style="display:block;filter:blur(1px)">
<rect width="77" height="64" fill="#c6c4c1"/><rect width="22" height="64" fill="#aeaca8"/><rect x="77" width="69" height="64" fill="#959c9f"/><rect x="146" width="5" height="64" fill="#eceae6"/>
<ellipse cx="3" cy="38" rx="6" ry="12" fill="#3f3f3f"/>
<path d="M16 64c6-10 6-54 21-54s15 38 23 46z" fill="#3c2a25"/>
<ellipse cx="36" cy="34" rx="10" ry="15" fill="#c9a494"/>
<path d="M0 64c2-8 14-9 24-9l2 9zM40 55c12 0 25 2 30 9H40z" fill="#e6e5ea"/>
<path d="M130 50h21v14h-21z" fill="#c9c2ae"/>
<path d="M118 64c0-6 6-9 14-9s12 4 14 9z" fill="#78858b"/>
<ellipse cx="103" cy="42" rx="15" ry="19" fill="#d4a890"/>
<path d="M90 62c2-7 8-8 13-8s12 1 13 8v2H90z" fill="#c88a6a"/>
<path d="M87 44c-2-24 8-30 17-30s18 8 16 30" fill="none" stroke="#1f1f20" stroke-width="2.400"/>
<rect x="84" y="36" width="7" height="14" rx="3" fill="#111"/><rect x="116" y="36" width="9" height="14" rx="3" fill="#222"/>
<path d="M95 44h7M106 44h7" stroke="#776" stroke-width="1.500"/>
</svg></div>

<!-- share notification -->
<div class="a" style="left:574px;top:865px;width:532px;height:37px;background:#fff;box-shadow:0 1px 3px rgba(0,0,0,.3)"></div>
<div class="a" style="left:584px;top:878px;width:2px;height:12px;background:#ccc"></div><div class="a" style="left:588px;top:878px;width:2px;height:12px;background:#ccc"></div>
<div class="t" style="left:597px;top:874px;font-size:10.500px;color:#444">Приложению events.webinar.ru предоставлен доступ к вашему экрану.</div>
<div class="b" style="left:946px;top:870px;width:106px;height:28px;background:#1a73e8;color:#fff;font-size:10.500px;line-height:28px;font-weight:bold">Закрыть доступ</div>
<div class="t" style="left:1061px;top:874px;font-size:10.500px;color:#1a73e8;text-decoration:underline">Скрыть</div>

<!-- cursor -->
<svg class="a" style="left:683px;top:544px" width="14" height="20" viewBox="0 0 14 20"><path d="M1 1v15l4-3 3 6 2-1-3-6h5z" fill="#f6f6f6" stroke="#555" stroke-width="1"/></svg>
<div class="a" style="left:0;top:908px;width:1680px;height:2px;background:#bdbdbd"></div>
</div>
</body></html>
